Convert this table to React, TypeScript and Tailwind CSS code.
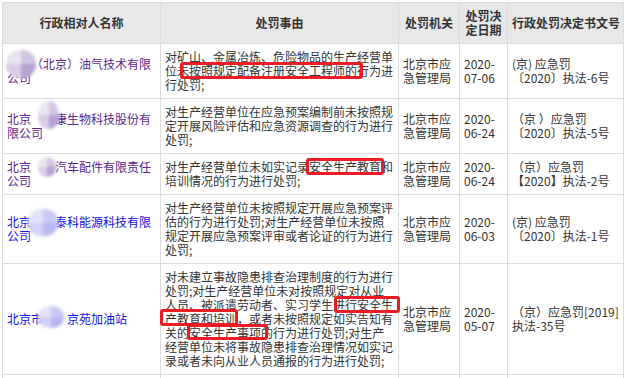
import type { ReactNode } from 'react'

type Tone = 'purple' | 'blue'

const tones: Record<Tone, string[]> = {
  purple: ['bg-[#ebe4f1]', 'bg-[#d2c5e3]', 'bg-[#d8cde6]', 'bg-[#b6a2d2]'],
  blue: ['bg-[#e2e2fb]', 'bg-[#c9c9f6]', 'bg-[#d2d2f8]', 'bg-[#b7b7f1]'],
}

// red hand-drawn highlight box, sits over the text
function Mark({ children, box }: { children: ReactNode; box: string }) {
  return (
    <span className="relative">
      {children}
      <span
        className={`pointer-events-none absolute rounded-[3px] border-[3px] border-[#ec1c24] ${box}`}
      />
    </span>
  )
}

// blurred mosaic over the hidden part of a name
function Hidden({ tone, box }: { tone: Tone; box: string }) {
  return (
    <span className="relative text-transparent">
      某某
      <span
        className={`pointer-events-none absolute grid grid-cols-2 overflow-hidden rounded-[45%] blur-[1.5px] ${box}`}
      >
        {tones[tone].map((c, i) => (
          <span key={i} className={c} />
        ))}
      </span>
    </span>
  )
}

const th = 'border border-[#dcdcdc] bg-[#e8e8e8] px-[4px] py-[6px] text-center align-middle font-bold'
const td = 'border border-[#dcdcdc] px-[4px] py-[6px] text-left align-middle'

const visited = 'text-[#5b1f8e]'
const link = 'text-[#1010ee]'

export default function App() {
  return (
    <div className="h-[378px] w-[624px] overflow-hidden bg-white p-[2px] font-['Noto_Sans_CJK_SC','Noto_Sans',sans-serif]">
      <table className="w-[621px] table-fixed border-collapse text-[12px] leading-[14px] text-[#333]">
        <colgroup>
          <col className="w-[158px]" />
          <col className="w-[238px]" />
          <col className="w-[61px]" />
          <col className="w-[48px]" />
          <col className="w-[116px]" />
        </colgroup>
        <thead>
          <tr>
            <th className={th}>行政相对人名称</th>
            <th className={th}>处罚事由</th>
            <th className={th}>处罚机关</th>
            <th className={th}>
              处罚决
              <br />
              定日期
            </th>
            <th className={`${th} whitespace-nowrap`}>行政处罚决定书文号</th>
          </tr>
        </thead>
        <tbody>
          <tr>
            <td className={td}>
              <span className={visited}>
                <Hidden tone="purple" box="left-[-1px] top-[-5px] h-[28px] w-[30px]" />
                （北京）油气技术有限公司
              </span>
            </td>
            <td className={td}>
              对矿山、金属冶炼、危险物品的生产经营单位
              <Mark box="left-[3px] right-[-6px] top-0 bottom-0">未按照规定配备注册安全工程师的</Mark>
              行为进行处罚;
            </td>
            <td className={td}>北京市应急管理局</td>
            <td className={td}>
              2020-
              <br />
              07-06
            </td>
            <td className={td}>
              (京) 应急罚
              <br />
              〔2020〕执法-6号
            </td>
          </tr>
          <tr>
            <td className={td}>
              <span className={visited}>
                北京
                <Hidden tone="purple" box="left-[7px] top-[-9px] h-[28px] w-[21px]" />
                康生物科技股份有限公司
              </span>
            </td>
            <td className={td}>
              对生产经营单位在应急预案编制前未按照规定开展风险评估和应急资源调查的行为进行处罚;
            </td>
            <td className={td}>北京市应急管理局</td>
            <td className={td}>
              2020-
              <br />
              06-24
            </td>
            <td className={td}>
              （京 ）应急罚
              <br />
              〔2020〕执法-5号
            </td>
          </tr>
          <tr>
            <td className={td}>
              <span className={visited}>
                北京
                <Hidden tone="purple" box="left-[7px] top-[-1px] h-[20px] w-[18px]" />
                汽车配件有限责任公司
              </span>
            </td>
            <td className={td}>
              对生产经营单位未如实记录
              <Mark box="left-[-3px] right-[-3px] top-0 bottom-0">安全生产教育</Mark>
              和培训情况的行为进行处罚;
            </td>
            <td className={td}>北京市应急管理局</td>
            <td className={td}>
              2020-
              <br />
              06-24
            </td>
            <td className={td}>
              （京）应急罚
              <br />
              【2020】执法-2号
            </td>
          </tr>
          <tr>
            <td className={td}>
              <span className={link}>
                北京
                <Hidden tone="blue" box="left-[-3px] top-[-4px] h-[27px] w-[30px]" />
                泰科能源科技有限公司
              </span>
            </td>
            <td className={td}>
              对生产经营单位未按照规定开展应急预案评估的行为进行处罚;对生产经营单位未按照规定开展应急预案评审或者论证的行为进行处罚;
            </td>
            <td className={td}>北京市应急管理局</td>
            <td className={td}>
              2020-
              <br />
              06-03
            </td>
            <td className={td}>
              (京) 应急罚
              <br />
              〔2020〕执法-1号
            </td>
          </tr>
          <tr>
            <td className={td}>
              <span className={link}>
                北京市
                <Hidden tone="blue" box="left-[-5px] top-[-4px] h-[22px] w-[26px]" />
                京苑加油站
              </span>
            </td>
            <td className={td}>
              对未建立事故隐患排查治理制度的行为进行处罚;对生产经营单位未对按照规定对从业人员、被派遣劳动者、实习学生
              <Mark box="left-[1px] right-[-7px] top-0 bottom-0">进行安全生</Mark>
              <Mark box="left-[-5px] right-[-1px] top-[-1px] bottom-[1px]">产教育和培训</Mark>
              ，或者未按照规定如实告知有关的
              <Mark box="left-[-2px] right-[-7px] top-0 bottom-[1px]">安全生产事项</Mark>
              的行为进行处罚;对生产经营单位未将事故隐患排查治理情况如实记录或者未向从业人员通报的行为进行处罚;
            </td>
            <td className={td}>北京市应急管理局</td>
            <td className={td}>
              2020-
              <br />
              05-07
            </td>
            <td className={td}>
              （京）应急罚[2019]
              <br />
              执法-35号
            </td>
          </tr>
          <tr>
            <td className={`${td} h-[30px]`} />
            <td className={td} />
            <td className={td} />
            <td className={td} />
            <td className={td} />
          </tr>
        </tbody>
      </table>
    </div>
  )
}
